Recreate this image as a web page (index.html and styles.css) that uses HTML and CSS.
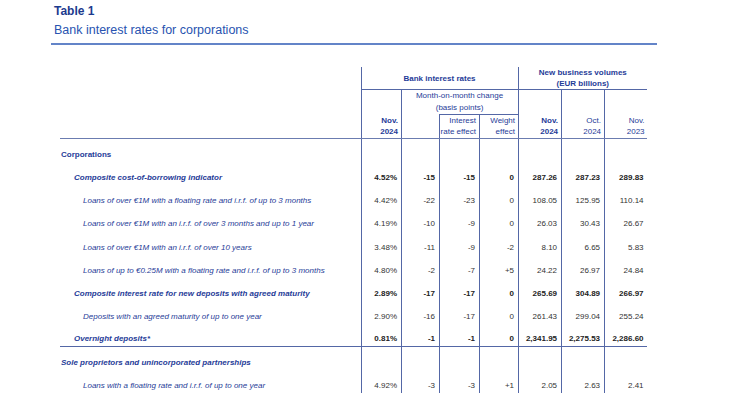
FILE: index.html
```html
<!DOCTYPE html>
<html>
<head>
<meta charset="utf-8">
<link rel="stylesheet" href="styles.css">
</head>
<body>
<div class="page">
  <div class="title">Table 1</div>
  <div class="subtitle">Bank interest rates for corporations</div>
  <table class="rates">
    <colgroup>
      <col class="c-lab"><col class="c40"><col class="c38"><col class="c40"><col class="c39"><col class="c43"><col class="c43"><col class="c43">
    </colgroup>
    <thead>
      <tr class="hA">
        <td class="lab hb" rowspan="3"></td>
        <th colspan="4" class="grp bl bb">Bank interest rates</th>
        <th colspan="3" class="grp bl bb">New business volumes<br>(EUR billions)</th>
      </tr>
      <tr class="hB">
        <th rowspan="2" class="bl hb strong">Nov.<br>2024</th>
        <th colspan="3" class="mom bl">Month-on-month change<br>(basis points)</th>
        <th rowspan="2" class="bl hb strong">Nov.<br>2024</th>
        <th rowspan="2" class="bl hb">Oct.<br>2024</th>
        <th rowspan="2" class="bl hb">Nov.<br>2023</th>
      </tr>
      <tr class="hC">
        <td class="bl hb"></td>
        <th class="bl bt hb">Interest<br>rate effect</th>
        <th class="bl bt hb">Weight<br>effect</th>
      </tr>
    </thead>
    <tbody>
      <tr>
        <td class="lab l0 b">Corporations</td>
        <td class="n"></td><td class="n"></td><td class="n"></td><td class="n"></td><td class="n"></td><td class="n"></td><td class="n"></td>
      </tr>
      <tr class="bold">
        <td class="lab l1 b i">Composite cost-of-borrowing indicator</td>
        <td class="n">4.52%</td><td class="n">-15</td><td class="n">-15</td><td class="n">0</td><td class="n">287.26</td><td class="n">287.23</td><td class="n">289.83</td>
      </tr>
      <tr>
        <td class="lab l2 i">Loans of over €1M with a floating rate and i.r.f. of up to 3 months</td>
        <td class="n">4.42%</td><td class="n">-22</td><td class="n">-23</td><td class="n">0</td><td class="n">108.05</td><td class="n">125.95</td><td class="n">110.14</td>
      </tr>
      <tr>
        <td class="lab l2 i">Loans of over €1M with an i.r.f. of over 3 months and up to 1 year</td>
        <td class="n">4.19%</td><td class="n">-10</td><td class="n">-9</td><td class="n">0</td><td class="n">26.03</td><td class="n">30.43</td><td class="n">26.67</td>
      </tr>
      <tr>
        <td class="lab l2 i">Loans of over €1M with an i.r.f. of over 10 years</td>
        <td class="n">3.48%</td><td class="n">-11</td><td class="n">-9</td><td class="n">-2</td><td class="n">8.10</td><td class="n">6.65</td><td class="n">5.83</td>
      </tr>
      <tr>
        <td class="lab l2 i">Loans of up to €0.25M with a floating rate and i.r.f. of up to 3 months</td>
        <td class="n">4.80%</td><td class="n">-2</td><td class="n">-7</td><td class="n">+5</td><td class="n">24.22</td><td class="n">26.97</td><td class="n">24.84</td>
      </tr>
      <tr class="bold">
        <td class="lab l1 b i">Composite interest rate for new deposits with agreed maturity</td>
        <td class="n">2.89%</td><td class="n">-17</td><td class="n">-17</td><td class="n">0</td><td class="n">265.69</td><td class="n">304.89</td><td class="n">266.97</td>
      </tr>
      <tr>
        <td class="lab l2 i">Deposits with an agreed maturity of up to one year</td>
        <td class="n">2.90%</td><td class="n">-16</td><td class="n">-17</td><td class="n">0</td><td class="n">261.43</td><td class="n">299.04</td><td class="n">255.24</td>
      </tr>
      <tr class="bold sep">
        <td class="lab l1 b i">Overnight deposits*</td>
        <td class="n">0.81%</td><td class="n">-1</td><td class="n">-1</td><td class="n">0</td><td class="n">2,341.95</td><td class="n">2,275.53</td><td class="n">2,286.60</td>
      </tr>
      <tr>
        <td class="lab l0 b i">Sole proprietors and unincorporated partnerships</td>
        <td class="n"></td><td class="n"></td><td class="n"></td><td class="n"></td><td class="n"></td><td class="n"></td><td class="n"></td>
      </tr>
      <tr>
        <td class="lab l2 i">Loans with a floating rate and i.r.f. of up to one year</td>
        <td class="n">4.92%</td><td class="n">-3</td><td class="n">-3</td><td class="n">+1</td><td class="n">2.05</td><td class="n">2.63</td><td class="n">2.41</td>
      </tr>
    </tbody>
  </table>
</div>
</body>
</html>
```

FILE: styles.css
```css
body {
  margin: 0;
  background: #ffffff;
  font-family: "Liberation Sans", Arial, sans-serif;
}

.page {
  margin-left: 51px;
  width: 606px;
  padding-top: 4px;
}

.title {
  font-size: 12px;
  font-weight: bold;
  line-height: 15px;
  color: #1c3a8e;
  padding-left: 3px;
}

.subtitle {
  font-size: 12.5px;
  line-height: 16px;
  color: #2853b0;
  padding-left: 3px;
  margin-top: 3px;
  padding-bottom: 5px;
  border-bottom: 2px solid #6384c8;
}

.rates {
  margin-left: 9px;
  margin-top: 22px;
  border-collapse: collapse;
  table-layout: fixed;
  width: 587px;
  font-size: 8px;
}

.c-lab { width: 301px; }
.c38 { width: 38px; }
.c39 { width: 39px; }
.c40 { width: 40px; }
.c43 { width: 43px; }

.rates th,
.rates td {
  padding: 0 3.5px;
  color: #1f3c98;
}

.rates th {
  font-weight: normal;
  text-align: right;
  vertical-align: bottom;
  line-height: 11px;
  padding: 0 2.5px 1px 0;
  white-space: nowrap;
}

.rates .grp {
  text-align: center;
  vertical-align: middle;
  font-weight: bold;
  line-height: 11.2px;
  padding: 0;
}

.rates .mom {
  text-align: center;
  vertical-align: top;
  line-height: 12px;
  padding: 0;
}

.rates th.strong { font-weight: bold; }

.hA { height: 22.8px; }
.hB { height: 24px; }
.hC { height: 23.4px; }

.bl { border-left: 1px solid #5467a6; }
.bb { border-bottom: 1px solid #5467a6; }
.bt { border-top: 1px solid #5467a6; }
.hb { border-bottom: 1px solid #6b7cb0; }

.rates tbody tr { height: 23.1px; }

.rates tbody td {
  vertical-align: bottom;
  line-height: 10px;
  padding-bottom: 1.8px;
  white-space: nowrap;
}

.rates td.n {
  text-align: right;
  color: #333333;
  border-left: 1px solid #5467a6;
}

.rates tr.bold td.n { font-weight: bold; color: #222222; }

.rates tr.sep td { border-bottom: 1px solid #5467a6; }

.lab.l0 { padding-left: 1px; }
.lab.l1 { padding-left: 14px; }
.lab.l2 { padding-left: 23px; }
.lab.b { font-weight: bold; }
.lab.i { font-style: italic; }
```
